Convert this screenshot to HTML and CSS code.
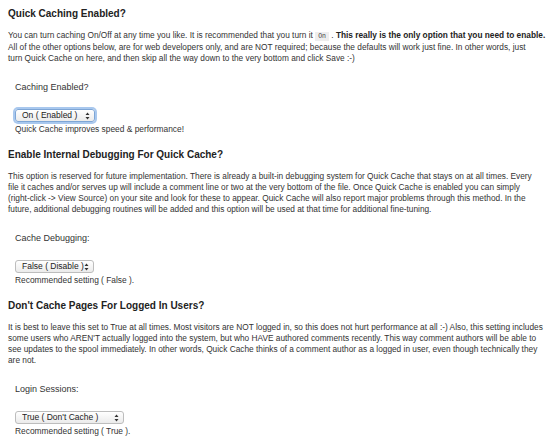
FILE: index.html
```html
<!DOCTYPE html>
<html>
<head>
<meta charset="utf-8">
<link rel="stylesheet" href="styles.css">
</head>
<body>
<div class="page">
  <section class="opt">
    <h3 class="opt-title">Quick Caching Enabled?</h3>
    <p class="opt-desc">You can turn caching On/Off at any time you like. It is recommended that you turn it <code class="kbd">On</code> . <strong>This really is the only option that you need to enable.</strong><br>All of the other options below, are for web developers only, and are NOT required; because the defaults will work just fine. In other words, just<br>turn Quick Cache on here, and then skip all the way down to the very bottom and click Save :-)</p>
    <div class="field">
      <label class="field-label">Caching Enabled?</label>
      <div class="select-wrap focused w80">
        <select class="select"><option>On ( Enabled )</option></select>
        <svg class="arrows" width="5" height="8" viewBox="0 0 5 8"><path d="M2.5 0.5 L4.5 3 H0.5 Z M2.5 7.5 L4.5 5 H0.5 Z" fill="#333"/></svg>
      </div>
      <div class="note">Quick Cache improves speed &amp; performance!</div>
    </div>
  </section>
  <section class="opt">
    <h3 class="opt-title">Enable Internal Debugging For Quick Cache?</h3>
    <p class="opt-desc">This option is reserved for future implementation. There is already a built-in debugging system for Quick Cache that stays on at all times. Every<br>file it caches and/or serves up will include a comment line or two at the very bottom of the file. Once Quick Cache is enabled you can simply<br>(right-click -&gt; View Source) on your site and look for these to appear. Quick Cache will also report major problems through this method. In the<br>future, additional debugging routines will be added and this option will be used at that time for additional fine-tuning.</p>
    <div class="field">
      <label class="field-label">Cache Debugging:</label>
      <div class="select-wrap w79">
        <select class="select"><option>False ( Disable )</option></select>
        <svg class="arrows" width="5" height="8" viewBox="0 0 5 8"><path d="M2.5 0.5 L4.5 3 H0.5 Z M2.5 7.5 L4.5 5 H0.5 Z" fill="#333"/></svg>
      </div>
      <div class="note">Recommended setting ( False ).</div>
    </div>
  </section>
  <section class="opt">
    <h3 class="opt-title">Don't Cache Pages For Logged In Users?</h3>
    <p class="opt-desc">It is best to leave this set to True at all times. Most visitors are NOT logged in, so this does not hurt performance at all :-) Also, this setting includes<br>some users who AREN'T actually logged into the system, but who HAVE authored comments recently. This way comment authors will be able to<br>see updates to the spool immediately. In other words, Quick Cache thinks of a comment author as a logged in user, even though technically they<br>are not.</p>
    <div class="field">
      <label class="field-label">Login Sessions:</label>
      <div class="select-wrap w109">
        <select class="select"><option>True ( Don't Cache )</option></select>
        <svg class="arrows" width="5" height="8" viewBox="0 0 5 8"><path d="M2.5 0.5 L4.5 3 H0.5 Z M2.5 7.5 L4.5 5 H0.5 Z" fill="#333"/></svg>
      </div>
      <div class="note">Recommended setting ( True ).</div>
    </div>
  </section>
</div>
</body>
</html>
```
FILE: styles.css
```css
html, body {
  margin: 0;
  padding: 0;
  background: #fff;
  overflow: hidden;
}
body {
  font-family: "Liberation Sans", Arial, Helvetica, sans-serif;
  color: #333;
}
.page {
  padding: 8px 0 0 8px;
  white-space: nowrap;
}
.opt {
  padding-bottom: 15px;
}
.opt-title {
  margin: 0;
  font-size: 10px;
  line-height: 12px;
  font-weight: bold;
  color: #222;
}
.opt-desc {
  margin: 10px 0 0 0;
  font-size: 8.3px;
  line-height: 11px;
  color: #333;
}
.opt-desc strong {
  color: #222;
}
.kbd {
  font-family: "Liberation Mono", monospace;
  font-size: 6.5px;
  background: #eee;
  padding: 1px 3px;
  color: #444;
}
.field {
  padding-left: 7px;
  margin-top: 18px;
  display: flex;
  flex-direction: column;
  align-items: flex-start;
}
.field-label {
  display: block;
  font-size: 9px;
  line-height: 11px;
  color: #333;
}
.select-wrap {
  position: relative;
  margin-top: 16px;
  height: 13px;
}
.w80 { width: 80px; }
.w79 { width: 79px; }
.w109 { width: 109px; }
.select {
  display: block;
  -webkit-appearance: none;
  appearance: none;
  box-sizing: border-box;
  width: 100%;
  height: 13px;
  margin: 0;
  padding: 0 0 0 6px;
  font-family: "Liberation Sans", Arial, sans-serif;
  font-size: 8.5px;
  line-height: 11px;
  color: #222;
  border: 1px solid #bdbdbd;
  border-radius: 3px;
  background: linear-gradient(#ffffff, #ebebeb);
  outline: none;
}
.focused .select {
  border-color: #7ea6d6;
  box-shadow: 0 0 0 2px #a9c8ee;
}
.arrows {
  position: absolute;
  right: 5px;
  top: 2.5px;
}
.note {
  margin-top: 3px;
  font-size: 8.4px;
  line-height: 9px;
  color: #333;
}
```
